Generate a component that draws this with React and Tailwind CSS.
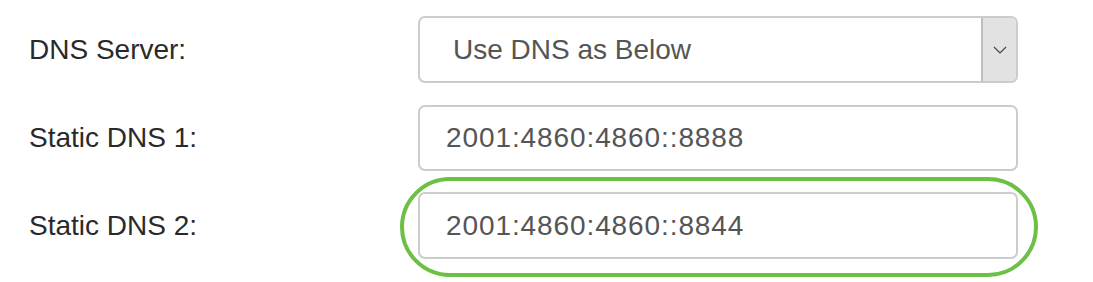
export default function App() {
  const font = { fontFamily: '"Liberation Sans", Arial, sans-serif' }
  return (
    <div className="w-[1093px] h-[282px] bg-white relative overflow-hidden" style={font}>
      <div className="pt-[16px] pl-[29px] flex flex-col gap-[22px]">
        {/* DNS Server */}
        <div className="flex items-center">
          <label className="w-[389px] text-[28px] text-[#2a2a2a]">DNS Server:</label>
          <div className="w-[600px] h-[67px] border-2 border-[#cccccc] rounded-[7px] flex overflow-hidden">
            <div className="flex-1 flex items-center pl-[33px] text-[28px] text-[#555]">Use DNS as Below</div>
            <div className="w-[35px] h-full bg-[#e2e2e2] border-l-2 border-[#bdbdbd] flex items-center justify-center">
              <svg width="14" height="8" viewBox="0 0 14 8" fill="none">
                <path d="M1 1 L7 7 L13 1" stroke="#444" strokeWidth="1.2" />
              </svg>
            </div>
          </div>
        </div>

        {/* Static DNS 1 */}
        <div className="flex items-center">
          <label className="w-[389px] text-[28px] text-[#2a2a2a]">Static DNS 1:</label>
          <div className="w-[600px] h-[66px] border-2 border-[#cccccc] rounded-[7px] flex items-center pl-[26px] text-[28px] tracking-[0.9px] text-[#555]">
            2001:4860:4860::8888
          </div>
        </div>

        {/* Static DNS 2 */}
        <div className="flex items-center -mt-[1px]">
          <label className="w-[389px] text-[28px] text-[#2a2a2a]">Static DNS 2:</label>
          <div className="relative">
            <div className="w-[600px] h-[67px] border-2 border-[#cccccc] rounded-[7px] flex items-center pl-[26px] text-[28px] tracking-[0.9px] text-[#555]">
              2001:4860:4860::8844
            </div>
            <div className="absolute -left-[18px] -right-[20px] -top-[15px] -bottom-[18px] border-4 border-[#6dbf45] rounded-[52px] pointer-events-none" />
          </div>
        </div>
      </div>
    </div>
  )
}
